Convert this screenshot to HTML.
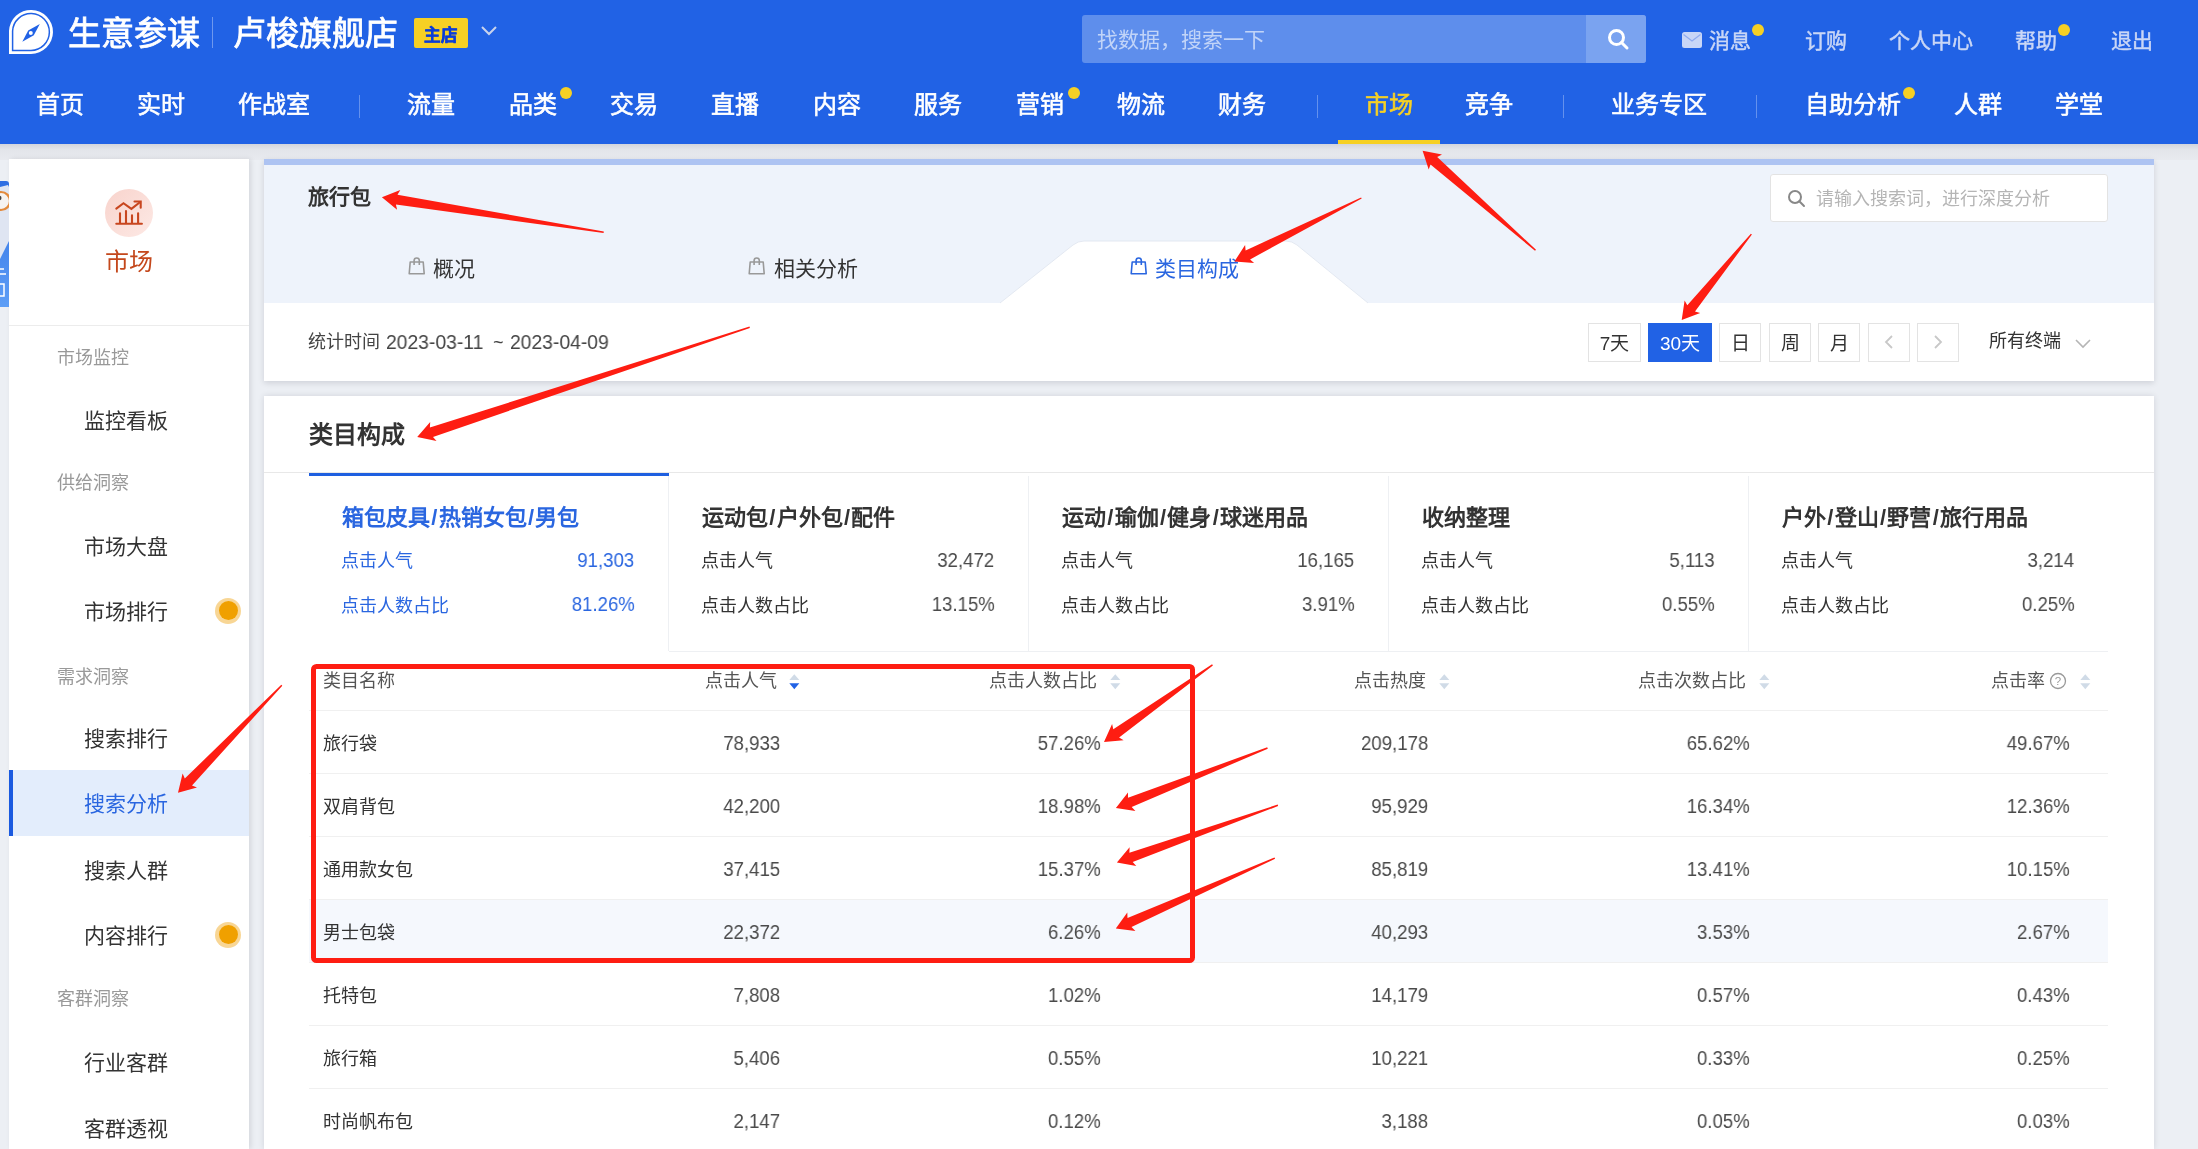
<!DOCTYPE html>
<html lang="zh-CN"><head><meta charset="utf-8"><style>
html,body{margin:0;padding:0;width:2198px;height:1149px;overflow:hidden;background:#eceff4;font-family:"Liberation Sans",sans-serif}
.t{position:absolute;white-space:nowrap;line-height:1;will-change:transform}
</style></head><body>
<div style="position:absolute;left:0px;top:0px;width:2198px;height:144px;background:#2162e5"></div>
<div style="position:absolute;left:0px;top:144px;width:2198px;height:16px;background:linear-gradient(#d3d5dc,#e3e5ea 35%,#e8eaef)"></div>
<svg style="position:absolute;left:0;top:0" width="60" height="60" viewBox="0 0 60 60">
<path d="M9 54 L9 31 A22 22 0 1 1 31 53.9 Z" fill="#fff"/>
<path d="M12.6 50.4 L12.6 31 A18.4 18.4 0 1 1 31 50.4 Z" fill="none" stroke="#2162e5" stroke-width="1.5"/>
<path d="M22.3 41.8 L28.2 30.6 L39.8 24 L33.8 35.2 Z" fill="#2162e5"/>
<circle cx="30.8" cy="33" r="2" fill="#fff"/>
</svg>
<div class="t" style="left:68.0px;top:17.1px;font-size:33px;color:#fff;font-weight:normal;-webkit-text-stroke:0.8px #fff;">生意参谋</div>
<div style="position:absolute;left:212px;top:17px;width:1px;height:31px;background:rgba(255,255,255,.35)"></div>
<div class="t" style="left:233.0px;top:17.1px;font-size:33px;color:#fff;font-weight:normal;-webkit-text-stroke:0.8px #fff;">卢梭旗舰店</div>
<div style="position:absolute;left:414px;top:18px;width:54px;height:30px;background:#f6d024;border-radius:2px"></div>
<div class="t" style="left:423.8px;top:26.8px;font-size:16.5px;color:#0a3dd8;font-weight:bold;-webkit-text-stroke:0.5px #0a3dd8;">主店</div>
<svg style="position:absolute;left:480px;top:25px" width="18" height="12"><path d="M2 2 L9 9 L16 2" fill="none" stroke="#c9d3ec" stroke-width="2"/></svg>
<div style="position:absolute;left:1082px;top:15px;width:564px;height:48px;background:#5e8eec;border-radius:3px"></div>
<div style="position:absolute;left:1586px;top:15px;width:60px;height:48px;background:#7aa3f0;border-radius:0 3px 3px 0"></div>
<div class="t" style="left:1097.3px;top:29.0px;font-size:21px;color:rgba(255,255,255,.62);font-weight:normal;">找数据，搜索一下</div>
<svg style="position:absolute;left:1606px;top:27px" width="24" height="24"><circle cx="10.5" cy="10.5" r="7" fill="none" stroke="#fff" stroke-width="3"/><path d="M15.5 15.5 L21 21" stroke="#fff" stroke-width="3" stroke-linecap="round"/></svg>
<svg style="position:absolute;left:1682px;top:32px" width="20" height="16"><rect x="0" y="0" width="20" height="16" rx="2.5" fill="#c8d6f7"/><path d="M1.5 2.5 L10 9 L18.5 2.5" fill="none" stroke="#8eaaf0" stroke-width="1.2"/></svg>
<div class="t" style="left:1709.3px;top:30.2px;font-size:21px;color:#cad7f6;font-weight:normal;-webkit-text-stroke:0.45px #cad7f6;">消息</div>
<div style="position:absolute;left:1752px;top:24px;width:12px;height:12px;background:#f6d024;border-radius:50%"></div>
<div class="t" style="left:1805.3px;top:30.2px;font-size:21px;color:#cad7f6;font-weight:normal;-webkit-text-stroke:0.45px #cad7f6;">订购</div>
<div class="t" style="left:1889.3px;top:30.2px;font-size:21px;color:#cad7f6;font-weight:normal;-webkit-text-stroke:0.45px #cad7f6;">个人中心</div>
<div class="t" style="left:2015.3px;top:30.2px;font-size:21px;color:#cad7f6;font-weight:normal;-webkit-text-stroke:0.45px #cad7f6;">帮助</div>
<div style="position:absolute;left:2058px;top:24px;width:12px;height:12px;background:#f6d024;border-radius:50%"></div>
<div class="t" style="left:2110.9px;top:30.2px;font-size:21px;color:#cad7f6;font-weight:normal;-webkit-text-stroke:0.45px #cad7f6;">退出</div>
<div class="t" style="left:35.6px;top:93.3px;font-size:24px;color:#fff;font-weight:normal;-webkit-text-stroke:0.6px #fff;">首页</div>
<div class="t" style="left:136.6px;top:93.3px;font-size:24px;color:#fff;font-weight:normal;-webkit-text-stroke:0.6px #fff;">实时</div>
<div class="t" style="left:237.6px;top:93.3px;font-size:24px;color:#fff;font-weight:normal;-webkit-text-stroke:0.6px #fff;">作战室</div>
<div class="t" style="left:406.9px;top:93.3px;font-size:24px;color:#fff;font-weight:normal;-webkit-text-stroke:0.6px #fff;">流量</div>
<div class="t" style="left:509.2px;top:93.3px;font-size:24px;color:#fff;font-weight:normal;-webkit-text-stroke:0.6px #fff;">品类</div>
<div class="t" style="left:610.2px;top:93.3px;font-size:24px;color:#fff;font-weight:normal;-webkit-text-stroke:0.6px #fff;">交易</div>
<div class="t" style="left:711.2px;top:93.3px;font-size:24px;color:#fff;font-weight:normal;-webkit-text-stroke:0.6px #fff;">直播</div>
<div class="t" style="left:813.2px;top:93.3px;font-size:24px;color:#fff;font-weight:normal;-webkit-text-stroke:0.6px #fff;">内容</div>
<div class="t" style="left:914.2px;top:93.3px;font-size:24px;color:#fff;font-weight:normal;-webkit-text-stroke:0.6px #fff;">服务</div>
<div class="t" style="left:1016.2px;top:93.3px;font-size:24px;color:#fff;font-weight:normal;-webkit-text-stroke:0.6px #fff;">营销</div>
<div class="t" style="left:1116.7px;top:93.3px;font-size:24px;color:#fff;font-weight:normal;-webkit-text-stroke:0.6px #fff;">物流</div>
<div class="t" style="left:1218.2px;top:93.3px;font-size:24px;color:#fff;font-weight:normal;-webkit-text-stroke:0.6px #fff;">财务</div>
<div class="t" style="left:1364.8px;top:93.3px;font-size:24px;color:#f6d024;font-weight:normal;-webkit-text-stroke:0.6px #f6d024;">市场</div>
<div class="t" style="left:1465.2px;top:93.3px;font-size:24px;color:#fff;font-weight:normal;-webkit-text-stroke:0.6px #fff;">竞争</div>
<div class="t" style="left:1611.2px;top:93.3px;font-size:24px;color:#fff;font-weight:normal;-webkit-text-stroke:0.6px #fff;">业务专区</div>
<div class="t" style="left:1804.7px;top:93.3px;font-size:24px;color:#fff;font-weight:normal;-webkit-text-stroke:0.6px #fff;">自助分析</div>
<div class="t" style="left:1953.8px;top:93.3px;font-size:24px;color:#fff;font-weight:normal;-webkit-text-stroke:0.6px #fff;">人群</div>
<div class="t" style="left:2055.2px;top:93.3px;font-size:24px;color:#fff;font-weight:normal;-webkit-text-stroke:0.6px #fff;">学堂</div>
<div style="position:absolute;left:359px;top:95px;width:1px;height:23px;background:rgba(255,255,255,.3)"></div>
<div style="position:absolute;left:1316.5px;top:95px;width:1.0px;height:23px;background:rgba(255,255,255,.3)"></div>
<div style="position:absolute;left:1563px;top:95px;width:1px;height:23px;background:rgba(255,255,255,.3)"></div>
<div style="position:absolute;left:1756px;top:95px;width:1px;height:23px;background:rgba(255,255,255,.3)"></div>
<div style="position:absolute;left:560px;top:87px;width:12px;height:12px;background:#f6d024;border-radius:50%"></div>
<div style="position:absolute;left:1068px;top:87px;width:12px;height:12px;background:#f6d024;border-radius:50%"></div>
<div style="position:absolute;left:1902.6px;top:87px;width:12.0px;height:12px;background:#f6d024;border-radius:50%"></div>
<div style="position:absolute;left:1338px;top:140px;width:102px;height:4px;background:#f6d024"></div>
<div style="position:absolute;left:0px;top:160px;width:2198px;height:989px;background:#eceff4"></div>
<div style="position:absolute;left:9px;top:159px;width:240px;height:990px;background:#fff;box-shadow:2px 0 5px rgba(0,0,20,.10)"></div>
<svg style="position:absolute;left:0;top:181px" width="9" height="126" viewBox="0 0 9 126">
<defs><linearGradient id="wg" x1="0" y1="0" x2="0" y2="1"><stop offset="0" stop-color="#2d6de2"/><stop offset="1" stop-color="#5d9ef6"/></linearGradient></defs>
<path d="M0 0 L6 0 Q9 0 9 3 L9 126 L0 126 Z" fill="url(#wg)"/>
<path d="M0 6 L8 4 L9 6 L9 60 L0 78 Z" fill="#dfe5f2"/>
<circle cx="1" cy="20" r="9" fill="#f6f3f1" stroke="#e38a3c" stroke-width="2.2"/>
<circle cx="-1" cy="17" r="2.5" fill="#444"/>
<path d="M0 88 L4 88 M0 93 L6 93" stroke="#fff" stroke-width="1.5"/>
<rect x="-2" y="103" width="6" height="12" fill="none" stroke="#fff" stroke-width="1.5"/>
</svg>
<div style="position:absolute;left:105px;top:189px;width:48px;height:48px;border-radius:50%;background:linear-gradient(135deg,#f8d3cc,#fde9e5)"></div>
<svg style="position:absolute;left:110px;top:195px" width="38" height="34" viewBox="0 0 38 34">
<g stroke="#c8461f" stroke-width="2.1" stroke-linecap="round" fill="none">
<path d="M6.3 28.8 L31.9 28.8"/>
<path d="M10 18.3 L10 28 M16 16.1 L16 28 M22 20.2 L22 28 M28.1 18.3 L28.1 28"/>
<path d="M6.3 13.7 L13.5 8.2 L21.4 13.9 L30.2 7"/>
<path d="M24.5 6.5 L30.7 6.5 L30.7 12.8"/>
</g></svg>
<div class="t" style="left:105.2px;top:250.3px;font-size:24px;color:#c4481c;font-weight:normal;">市场</div>
<div style="position:absolute;left:9px;top:325px;width:240px;height:1px;background:#ececec"></div>
<div class="t" style="left:56.8px;top:349.4px;font-size:18px;color:#999;font-weight:normal;">市场监控</div>
<div class="t" style="left:56.8px;top:474.4px;font-size:18px;color:#999;font-weight:normal;">供给洞察</div>
<div class="t" style="left:56.8px;top:667.9px;font-size:18px;color:#999;font-weight:normal;">需求洞察</div>
<div class="t" style="left:56.8px;top:990.4px;font-size:18px;color:#999;font-weight:normal;">客群洞察</div>
<div style="position:absolute;left:9px;top:770px;width:240px;height:66px;background:#e3edfc"></div>
<div style="position:absolute;left:9px;top:770px;width:4px;height:66px;background:#1a5ae0"></div>
<div class="t" style="left:84.3px;top:410.0px;font-size:21px;color:#333;font-weight:normal;">监控看板</div>
<div class="t" style="left:84.3px;top:536.4px;font-size:21px;color:#333;font-weight:normal;">市场大盘</div>
<div class="t" style="left:84.3px;top:601.4px;font-size:21px;color:#333;font-weight:normal;">市场排行</div>
<div class="t" style="left:84.3px;top:728.4px;font-size:21px;color:#333;font-weight:normal;">搜索排行</div>
<div class="t" style="left:84.3px;top:793.4px;font-size:21px;color:#2a66e0;font-weight:normal;">搜索分析</div>
<div class="t" style="left:84.3px;top:860.4px;font-size:21px;color:#333;font-weight:normal;">搜索人群</div>
<div class="t" style="left:84.3px;top:925.4px;font-size:21px;color:#333;font-weight:normal;">内容排行</div>
<div class="t" style="left:84.3px;top:1052.4px;font-size:21px;color:#333;font-weight:normal;">行业客群</div>
<div class="t" style="left:84.3px;top:1118.4px;font-size:21px;color:#333;font-weight:normal;">客群透视</div>
<div style="position:absolute;left:215px;top:597.5px;width:26px;height:26px;border-radius:50%;background:rgba(240,165,20,.45)"></div>
<div style="position:absolute;left:218.5px;top:601.0px;width:19px;height:19px;border-radius:50%;background:#f0a000"></div>
<div style="position:absolute;left:215px;top:921.6px;width:26px;height:26px;border-radius:50%;background:rgba(240,165,20,.45)"></div>
<div style="position:absolute;left:218.5px;top:925.1px;width:19px;height:19px;border-radius:50%;background:#f0a000"></div>
<div style="position:absolute;left:264px;top:159px;width:1890px;height:222px;background:#fff;box-shadow:0 2px 6px rgba(0,0,30,.13)"></div>
<div style="position:absolute;left:264px;top:159px;width:1890px;height:6px;background:#adc3f2"></div>
<div style="position:absolute;left:264px;top:165px;width:1890px;height:138px;background:#eef3fb"></div>
<svg style="position:absolute;left:0;top:0" width="2198" height="400"><path d="M1000 303 L1073 245 Q1078 241 1084 241 L1286 241 Q1292 241 1297 245 L1368 303 Z" fill="#fff"/><path d="M1000 303 L1073 245 Q1078 241 1084 241 L1286 241 Q1292 241 1297 245 L1368 303" fill="none" stroke="#e3e8f1" stroke-width="1"/></svg>
<div class="t" style="left:308.3px;top:185.9px;font-size:21px;color:#333;font-weight:bold;">旅行包</div>
<svg style="position:absolute;left:408px;top:256.5px" width="18" height="18" viewBox="0 0 18 18"><path d="M1.2 16.7 L2.2 5 L15.2 5 L16.2 16.7 Z" fill="none" stroke="#999" stroke-width="1.6" stroke-linejoin="round"/><path d="M6.1 8.1 L6.1 3.6 A2.6 2.6 0 0 1 11.3 3.6 L11.3 8.1" fill="none" stroke="#999" stroke-width="1.6"/></svg>
<div class="t" style="left:433.3px;top:258.0px;font-size:21px;color:#333;font-weight:normal;">概况</div>
<svg style="position:absolute;left:748px;top:256.5px" width="18" height="18" viewBox="0 0 18 18"><path d="M1.2 16.7 L2.2 5 L15.2 5 L16.2 16.7 Z" fill="none" stroke="#999" stroke-width="1.6" stroke-linejoin="round"/><path d="M6.1 8.1 L6.1 3.6 A2.6 2.6 0 0 1 11.3 3.6 L11.3 8.1" fill="none" stroke="#999" stroke-width="1.6"/></svg>
<div class="t" style="left:774.3px;top:258.0px;font-size:21px;color:#333;font-weight:normal;">相关分析</div>
<svg style="position:absolute;left:1130px;top:256.5px" width="18" height="18" viewBox="0 0 18 18"><path d="M1.2 16.7 L2.2 5 L15.2 5 L16.2 16.7 Z" fill="none" stroke="#2a66e0" stroke-width="1.6" stroke-linejoin="round"/><path d="M6.1 8.1 L6.1 3.6 A2.6 2.6 0 0 1 11.3 3.6 L11.3 8.1" fill="none" stroke="#2a66e0" stroke-width="1.6"/></svg>
<div class="t" style="left:1155.3px;top:258.0px;font-size:21px;color:#2a66e0;font-weight:normal;">类目构成</div>
<div style="position:absolute;left:1770px;top:174px;width:338px;height:48px;background:#fff;border:1px solid #e3e3e3;border-radius:3px;box-sizing:border-box"></div>
<svg style="position:absolute;left:1787px;top:189px" width="20" height="20"><circle cx="8" cy="8" r="6" fill="none" stroke="#888" stroke-width="2"/><path d="M12.3 12.3 L17 17" stroke="#888" stroke-width="2" stroke-linecap="round"/></svg>
<div class="t" style="left:1816.1px;top:190.4px;font-size:18px;color:#b5b5b5;font-weight:normal;">请输入搜索词，进行深度分析</div>
<div class="t" style="left:308.1px;top:333.4px;font-size:18px;color:#444;font-weight:normal;">统计时间</div>
<div class="t" style="left:386.0px;top:332.07px;font-size:20px;color:#444;transform:scaleX(0.965);transform-origin:left">2023-03-11</div>
<div class="t" style="left:493.0px;top:332.07px;font-size:20px;color:#444;transform:scaleX(0.9);transform-origin:left">~</div>
<div class="t" style="left:510.0px;top:332.07px;font-size:20px;color:#444;transform:scaleX(0.965);transform-origin:left">2023-04-09</div>
<div style="position:absolute;left:1588px;top:323px;width:53px;height:39px;background:#fff;border:1px solid #e3e3e3;box-sizing:border-box"></div>
<div class="t" style="left:1588px;width:53px;top:333.5px;font-size:19px;color:#333;text-align:center">7天</div>
<div style="position:absolute;left:1648px;top:323px;width:64px;height:39px;background:#2162e5"></div>
<div class="t" style="left:1648px;width:64px;top:333.5px;font-size:19px;color:#fff;text-align:center">30天</div>
<div style="position:absolute;left:1719px;top:323px;width:42px;height:39px;background:#fff;border:1px solid #e3e3e3;box-sizing:border-box"></div>
<div class="t" style="left:1719px;width:42px;top:333.5px;font-size:19px;color:#333;text-align:center">日</div>
<div style="position:absolute;left:1769px;top:323px;width:42px;height:39px;background:#fff;border:1px solid #e3e3e3;box-sizing:border-box"></div>
<div class="t" style="left:1769px;width:42px;top:333.5px;font-size:19px;color:#333;text-align:center">周</div>
<div style="position:absolute;left:1818px;top:323px;width:42px;height:39px;background:#fff;border:1px solid #e3e3e3;box-sizing:border-box"></div>
<div class="t" style="left:1818px;width:42px;top:333.5px;font-size:19px;color:#333;text-align:center">月</div>
<div style="position:absolute;left:1868px;top:323px;width:42px;height:39px;background:#fff;border:1px solid #e3e3e3;box-sizing:border-box"></div>
<div style="position:absolute;left:1917px;top:323px;width:42px;height:39px;background:#fff;border:1px solid #e3e3e3;box-sizing:border-box"></div>
<svg style="position:absolute;left:1880px;top:333px" width="18" height="18"><path d="M12 3 L6 9 L12 15" fill="none" stroke="#c8c8c8" stroke-width="1.8"/></svg>
<svg style="position:absolute;left:1929px;top:333px" width="18" height="18"><path d="M6 3 L12 9 L6 15" fill="none" stroke="#c8c8c8" stroke-width="1.8"/></svg>
<div class="t" style="left:1989.3px;top:332.4px;font-size:18px;color:#333;font-weight:normal;">所有终端</div>
<svg style="position:absolute;left:2074px;top:336px" width="18" height="14"><path d="M2 4 L9 11 L16 4" fill="none" stroke="#b5b5b5" stroke-width="1.6"/></svg>
<div style="position:absolute;left:264px;top:396px;width:1890px;height:753px;background:#fff;box-shadow:0 0 6px rgba(0,0,30,.12)"></div>
<div class="t" style="left:308.6px;top:423.3px;font-size:24px;color:#333;font-weight:bold;">类目构成</div>
<div style="position:absolute;left:264px;top:472px;width:1890px;height:1px;background:#e8e8e8"></div>
<div style="position:absolute;left:309px;top:473px;width:360px;height:3px;background:#1e5fe0"></div>
<div class="t" style="left:341.5px;top:507.1px;font-size:22px;color:#2a66e0;font-weight:bold;">箱包皮具<span style="margin:0 1.3px">/</span>热销女包<span style="margin:0 1.3px">/</span>男包</div>
<div class="t" style="left:341.3px;top:552.4px;font-size:18px;color:#2a66e0;font-weight:normal;">点击人气</div>
<div class="t" style="left:341.3px;top:596.9px;font-size:18px;color:#2a66e0;font-weight:normal;">点击人数占比</div>
<div class="t" style="right:1563.5px;top:550.07px;font-size:20px;color:#2a66e0;transform:scaleX(0.93);transform-origin:right">91,303</div>
<div class="t" style="right:1563.5px;top:594.07px;font-size:20px;color:#2a66e0;transform:scaleX(0.93);transform-origin:right">81.26%</div>
<div style="position:absolute;left:668px;top:476px;width:1px;height:175px;background:#eef0f3"></div>
<div class="t" style="left:701.5px;top:507.1px;font-size:22px;color:#333;font-weight:bold;">运动包<span style="margin:0 1.3px">/</span>户外包<span style="margin:0 1.3px">/</span>配件</div>
<div class="t" style="left:701.3px;top:552.4px;font-size:18px;color:#333;font-weight:normal;">点击人气</div>
<div class="t" style="left:701.3px;top:596.9px;font-size:18px;color:#333;font-weight:normal;">点击人数占比</div>
<div class="t" style="right:1203.5px;top:550.07px;font-size:20px;color:#4a4a4a;transform:scaleX(0.93);transform-origin:right">32,472</div>
<div class="t" style="right:1203.5px;top:594.07px;font-size:20px;color:#4a4a4a;transform:scaleX(0.93);transform-origin:right">13.15%</div>
<div style="position:absolute;left:1028px;top:476px;width:1px;height:175px;background:#eef0f3"></div>
<div class="t" style="left:1061.5px;top:507.1px;font-size:22px;color:#333;font-weight:bold;">运动<span style="margin:0 1.3px">/</span>瑜伽<span style="margin:0 1.3px">/</span>健身<span style="margin:0 1.3px">/</span>球迷用品</div>
<div class="t" style="left:1061.3px;top:552.4px;font-size:18px;color:#333;font-weight:normal;">点击人气</div>
<div class="t" style="left:1061.3px;top:596.9px;font-size:18px;color:#333;font-weight:normal;">点击人数占比</div>
<div class="t" style="right:843.5px;top:550.07px;font-size:20px;color:#4a4a4a;transform:scaleX(0.93);transform-origin:right">16,165</div>
<div class="t" style="right:843.5px;top:594.07px;font-size:20px;color:#4a4a4a;transform:scaleX(0.93);transform-origin:right">3.91%</div>
<div style="position:absolute;left:1388px;top:476px;width:1px;height:175px;background:#eef0f3"></div>
<div class="t" style="left:1421.5px;top:507.1px;font-size:22px;color:#333;font-weight:bold;">收纳整理</div>
<div class="t" style="left:1421.3px;top:552.4px;font-size:18px;color:#333;font-weight:normal;">点击人气</div>
<div class="t" style="left:1421.3px;top:596.9px;font-size:18px;color:#333;font-weight:normal;">点击人数占比</div>
<div class="t" style="right:483.5px;top:550.07px;font-size:20px;color:#4a4a4a;transform:scaleX(0.93);transform-origin:right">5,113</div>
<div class="t" style="right:483.5px;top:594.07px;font-size:20px;color:#4a4a4a;transform:scaleX(0.93);transform-origin:right">0.55%</div>
<div style="position:absolute;left:1748px;top:476px;width:1px;height:175px;background:#eef0f3"></div>
<div class="t" style="left:1781.5px;top:507.1px;font-size:22px;color:#333;font-weight:bold;">户外<span style="margin:0 1.3px">/</span>登山<span style="margin:0 1.3px">/</span>野营<span style="margin:0 1.3px">/</span>旅行用品</div>
<div class="t" style="left:1781.3px;top:552.4px;font-size:18px;color:#333;font-weight:normal;">点击人气</div>
<div class="t" style="left:1781.3px;top:596.9px;font-size:18px;color:#333;font-weight:normal;">点击人数占比</div>
<div class="t" style="right:123.5px;top:550.07px;font-size:20px;color:#4a4a4a;transform:scaleX(0.93);transform-origin:right">3,214</div>
<div class="t" style="right:123.5px;top:594.07px;font-size:20px;color:#4a4a4a;transform:scaleX(0.93);transform-origin:right">0.25%</div>
<div style="position:absolute;left:669px;top:651px;width:1439px;height:1px;background:#eef0f3"></div>
<div style="position:absolute;left:309px;top:710px;width:1799px;height:1px;background:#f0f0f0"></div>
<div style="position:absolute;left:309px;top:899px;width:1799px;height:63px;background:#f5f8fd"></div>
<div style="position:absolute;left:309px;top:773px;width:1799px;height:1px;background:#f0f0f0"></div>
<div class="t" style="left:323.3px;top:735.0px;font-size:18px;color:#333;font-weight:normal;">旅行袋</div>
<div class="t" style="right:1417.5px;top:733.07px;font-size:20px;color:#4a4a4a;transform:scaleX(0.93);transform-origin:right">78,933</div>
<div class="t" style="right:1097.5px;top:733.07px;font-size:20px;color:#4a4a4a;transform:scaleX(0.93);transform-origin:right">57.26%</div>
<div class="t" style="right:769.5px;top:733.07px;font-size:20px;color:#4a4a4a;transform:scaleX(0.93);transform-origin:right">209,178</div>
<div class="t" style="right:448.5px;top:733.07px;font-size:20px;color:#4a4a4a;transform:scaleX(0.93);transform-origin:right">65.62%</div>
<div class="t" style="right:128.5px;top:733.07px;font-size:20px;color:#4a4a4a;transform:scaleX(0.93);transform-origin:right">49.67%</div>
<div style="position:absolute;left:309px;top:836px;width:1799px;height:1px;background:#f0f0f0"></div>
<div class="t" style="left:323.3px;top:798.0px;font-size:18px;color:#333;font-weight:normal;">双肩背包</div>
<div class="t" style="right:1417.5px;top:796.07px;font-size:20px;color:#4a4a4a;transform:scaleX(0.93);transform-origin:right">42,200</div>
<div class="t" style="right:1097.5px;top:796.07px;font-size:20px;color:#4a4a4a;transform:scaleX(0.93);transform-origin:right">18.98%</div>
<div class="t" style="right:769.5px;top:796.07px;font-size:20px;color:#4a4a4a;transform:scaleX(0.93);transform-origin:right">95,929</div>
<div class="t" style="right:448.5px;top:796.07px;font-size:20px;color:#4a4a4a;transform:scaleX(0.93);transform-origin:right">16.34%</div>
<div class="t" style="right:128.5px;top:796.07px;font-size:20px;color:#4a4a4a;transform:scaleX(0.93);transform-origin:right">12.36%</div>
<div style="position:absolute;left:309px;top:899px;width:1799px;height:1px;background:#f0f0f0"></div>
<div class="t" style="left:323.3px;top:861.0px;font-size:18px;color:#333;font-weight:normal;">通用款女包</div>
<div class="t" style="right:1417.5px;top:859.07px;font-size:20px;color:#4a4a4a;transform:scaleX(0.93);transform-origin:right">37,415</div>
<div class="t" style="right:1097.5px;top:859.07px;font-size:20px;color:#4a4a4a;transform:scaleX(0.93);transform-origin:right">15.37%</div>
<div class="t" style="right:769.5px;top:859.07px;font-size:20px;color:#4a4a4a;transform:scaleX(0.93);transform-origin:right">85,819</div>
<div class="t" style="right:448.5px;top:859.07px;font-size:20px;color:#4a4a4a;transform:scaleX(0.93);transform-origin:right">13.41%</div>
<div class="t" style="right:128.5px;top:859.07px;font-size:20px;color:#4a4a4a;transform:scaleX(0.93);transform-origin:right">10.15%</div>
<div style="position:absolute;left:309px;top:962px;width:1799px;height:1px;background:#f0f0f0"></div>
<div class="t" style="left:323.3px;top:924.0px;font-size:18px;color:#333;font-weight:normal;">男士包袋</div>
<div class="t" style="right:1417.5px;top:922.07px;font-size:20px;color:#4a4a4a;transform:scaleX(0.93);transform-origin:right">22,372</div>
<div class="t" style="right:1097.5px;top:922.07px;font-size:20px;color:#4a4a4a;transform:scaleX(0.93);transform-origin:right">6.26%</div>
<div class="t" style="right:769.5px;top:922.07px;font-size:20px;color:#4a4a4a;transform:scaleX(0.93);transform-origin:right">40,293</div>
<div class="t" style="right:448.5px;top:922.07px;font-size:20px;color:#4a4a4a;transform:scaleX(0.93);transform-origin:right">3.53%</div>
<div class="t" style="right:128.5px;top:922.07px;font-size:20px;color:#4a4a4a;transform:scaleX(0.93);transform-origin:right">2.67%</div>
<div style="position:absolute;left:309px;top:1025px;width:1799px;height:1px;background:#f0f0f0"></div>
<div class="t" style="left:323.3px;top:987.0px;font-size:18px;color:#333;font-weight:normal;">托特包</div>
<div class="t" style="right:1417.5px;top:985.07px;font-size:20px;color:#4a4a4a;transform:scaleX(0.93);transform-origin:right">7,808</div>
<div class="t" style="right:1097.5px;top:985.07px;font-size:20px;color:#4a4a4a;transform:scaleX(0.93);transform-origin:right">1.02%</div>
<div class="t" style="right:769.5px;top:985.07px;font-size:20px;color:#4a4a4a;transform:scaleX(0.93);transform-origin:right">14,179</div>
<div class="t" style="right:448.5px;top:985.07px;font-size:20px;color:#4a4a4a;transform:scaleX(0.93);transform-origin:right">0.57%</div>
<div class="t" style="right:128.5px;top:985.07px;font-size:20px;color:#4a4a4a;transform:scaleX(0.93);transform-origin:right">0.43%</div>
<div style="position:absolute;left:309px;top:1088px;width:1799px;height:1px;background:#f0f0f0"></div>
<div class="t" style="left:323.3px;top:1050.0px;font-size:18px;color:#333;font-weight:normal;">旅行箱</div>
<div class="t" style="right:1417.5px;top:1048.07px;font-size:20px;color:#4a4a4a;transform:scaleX(0.93);transform-origin:right">5,406</div>
<div class="t" style="right:1097.5px;top:1048.07px;font-size:20px;color:#4a4a4a;transform:scaleX(0.93);transform-origin:right">0.55%</div>
<div class="t" style="right:769.5px;top:1048.07px;font-size:20px;color:#4a4a4a;transform:scaleX(0.93);transform-origin:right">10,221</div>
<div class="t" style="right:448.5px;top:1048.07px;font-size:20px;color:#4a4a4a;transform:scaleX(0.93);transform-origin:right">0.33%</div>
<div class="t" style="right:128.5px;top:1048.07px;font-size:20px;color:#4a4a4a;transform:scaleX(0.93);transform-origin:right">0.25%</div>
<div class="t" style="left:323.3px;top:1113.0px;font-size:18px;color:#333;font-weight:normal;">时尚帆布包</div>
<div class="t" style="right:1417.5px;top:1111.07px;font-size:20px;color:#4a4a4a;transform:scaleX(0.93);transform-origin:right">2,147</div>
<div class="t" style="right:1097.5px;top:1111.07px;font-size:20px;color:#4a4a4a;transform:scaleX(0.93);transform-origin:right">0.12%</div>
<div class="t" style="right:769.5px;top:1111.07px;font-size:20px;color:#4a4a4a;transform:scaleX(0.93);transform-origin:right">3,188</div>
<div class="t" style="right:448.5px;top:1111.07px;font-size:20px;color:#4a4a4a;transform:scaleX(0.93);transform-origin:right">0.05%</div>
<div class="t" style="right:128.5px;top:1111.07px;font-size:20px;color:#4a4a4a;transform:scaleX(0.93);transform-origin:right">0.03%</div>
<div class="t" style="left:323.3px;top:672.4px;font-size:18px;color:#555;font-weight:normal;">类目名称</div>
<div class="t" style="left:704.7px;top:672.4px;font-size:18px;color:#555;font-weight:normal;">点击人气</div>
<svg style="position:absolute;left:789px;top:674px" width="12" height="16"><path d="M0.3 6 L5.3 0.2 L10.3 6 Z" fill="#d0dbe7"/><path d="M0.3 9.3 L5.3 15.2 L10.3 9.3 Z" fill="#2162e5"/></svg>
<div class="t" style="left:989.3px;top:672.4px;font-size:18px;color:#555;font-weight:normal;">点击人数占比</div>
<svg style="position:absolute;left:1110.4px;top:674px" width="12" height="16"><path d="M0.3 6 L5.3 0.2 L10.3 6 Z" fill="#d0dbe7"/><path d="M0.3 9.3 L5.3 15.2 L10.3 9.3 Z" fill="#d0dbe7"/></svg>
<div class="t" style="left:1353.7px;top:672.4px;font-size:18px;color:#555;font-weight:normal;">点击热度</div>
<svg style="position:absolute;left:1438.6px;top:674px" width="12" height="16"><path d="M0.3 6 L5.3 0.2 L10.3 6 Z" fill="#d0dbe7"/><path d="M0.3 9.3 L5.3 15.2 L10.3 9.3 Z" fill="#d0dbe7"/></svg>
<div class="t" style="left:1637.7px;top:672.4px;font-size:18px;color:#555;font-weight:normal;">点击次数占比</div>
<svg style="position:absolute;left:1758.8px;top:674px" width="12" height="16"><path d="M0.3 6 L5.3 0.2 L10.3 6 Z" fill="#d0dbe7"/><path d="M0.3 9.3 L5.3 15.2 L10.3 9.3 Z" fill="#d0dbe7"/></svg>
<div class="t" style="left:1991.3px;top:672.4px;font-size:18px;color:#555;font-weight:normal;">点击率</div>
<svg style="position:absolute;left:2079.6px;top:674px" width="12" height="16"><path d="M0.3 6 L5.3 0.2 L10.3 6 Z" fill="#d0dbe7"/><path d="M0.3 9.3 L5.3 15.2 L10.3 9.3 Z" fill="#d0dbe7"/></svg>
<svg style="position:absolute;left:2049px;top:672px" width="18" height="18"><circle cx="9" cy="9" r="7.5" fill="none" stroke="#999" stroke-width="1.3"/><text x="9" y="13.2" font-size="11.5" text-anchor="middle" fill="#999" font-family="Liberation Sans">?</text></svg>
<svg style="position:absolute;left:0;top:0" width="2198" height="1149"><g fill="#fe1d12"><polygon points="381.9,197.3 400.3,190.1 397.5,194.7 603.8,231.6 603.6,233.0 395.9,204.6 397.1,209.8"/><polygon points="1234.4,261.6 1245.1,245.0 1245.6,250.4 1361.1,197.4 1361.7,198.6 1250.1,259.4 1254.1,262.9"/><polygon points="1422.6,150.8 1442.0,154.5 1437.2,157.0 1536.0,249.8 1535.0,250.8 1430.5,164.5 1428.7,169.5"/><polygon points="1681.7,320.0 1684.6,300.5 1687.3,305.2 1750.9,233.7 1751.9,234.5 1695.0,311.5 1700.2,313.1"/><polygon points="417.2,436.9 430.2,422.1 429.9,427.5 749.5,326.5 749.9,327.9 433.0,436.9 436.5,441.1"/><polygon points="178.0,792.8 182.6,773.6 184.8,778.5 281.3,684.7 282.3,685.7 192.0,785.5 197.0,787.5"/><polygon points="1104.0,742.0 1112.1,724.0 1113.3,729.2 1212.1,664.2 1212.9,665.4 1119.1,737.4 1123.6,740.3"/><polygon points="1115.9,808.0 1128.0,792.4 1128.0,797.8 1267.2,747.3 1267.8,748.7 1131.7,807.1 1135.4,811.0"/><polygon points="1116.9,862.4 1129.6,847.3 1129.4,852.7 1277.7,804.6 1278.1,806.0 1132.7,862.1 1136.3,866.1"/><polygon points="1115.8,928.6 1127.3,912.6 1127.5,917.9 1274.5,857.5 1275.1,858.7 1131.5,927.1 1135.4,930.9"/></g><rect x="313.5" y="666.5" width="879" height="294" rx="3" fill="none" stroke="#fe1d12" stroke-width="5"/></svg>
</body></html>
